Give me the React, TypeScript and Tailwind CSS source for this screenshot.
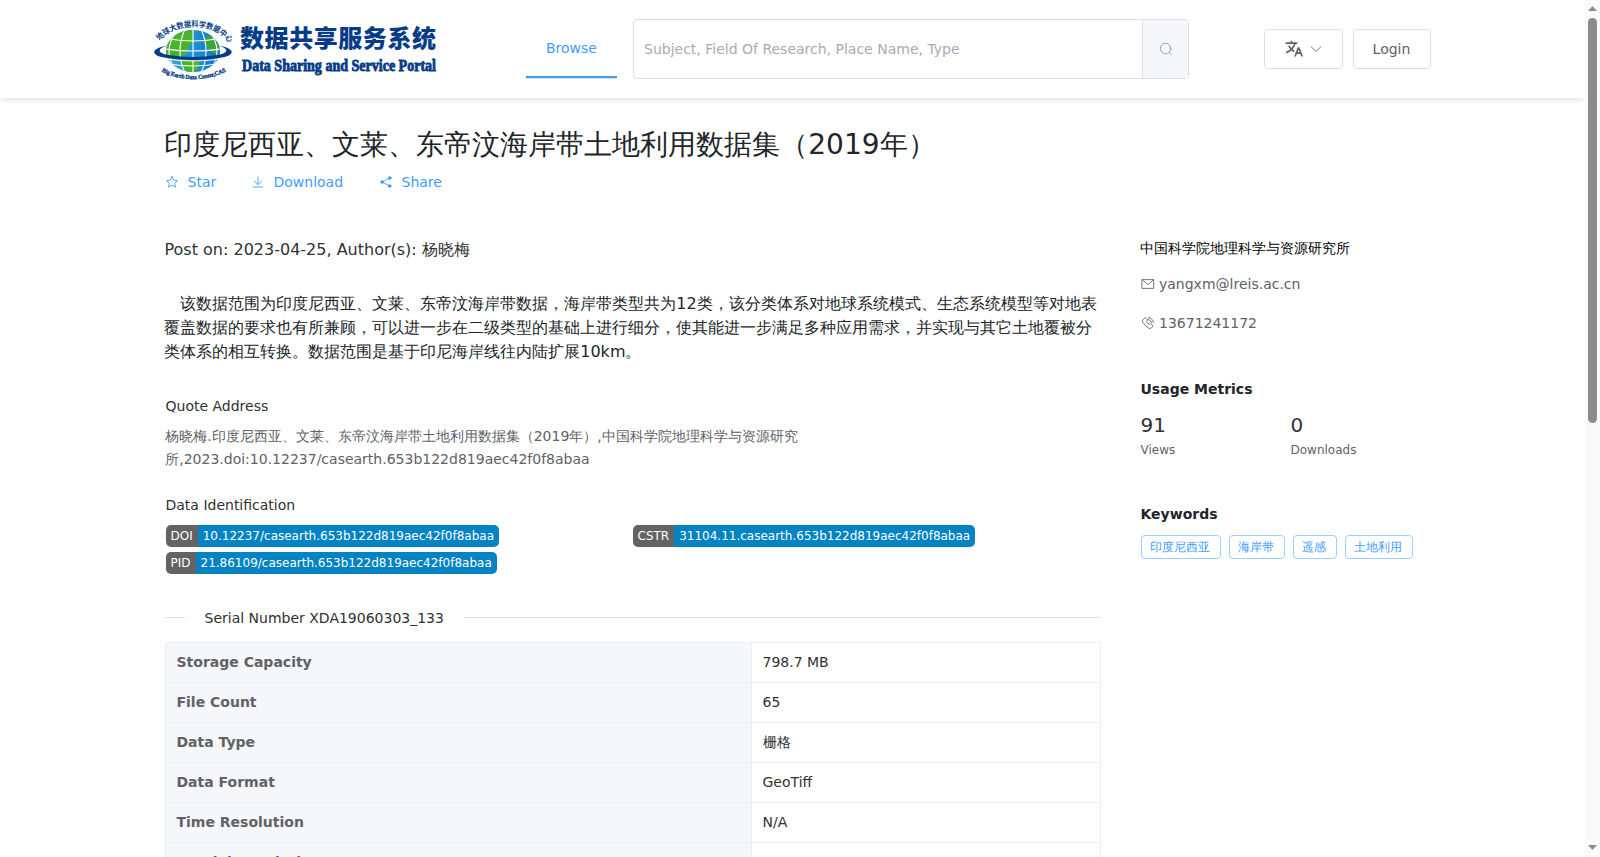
import type { ReactNode } from 'react';

const rows: [string, string][] = [
  ['Storage Capacity', '798.7 MB'],
  ['File Count', '65'],
  ['Data Type', '栅格'],
  ['Data Format', 'GeoTiff'],
  ['Time Resolution', 'N/A'],
  ['Spatial Resolution', ''],
];

const keywords = ['印度尼西亚', '海岸带', '遥感', '土地利用'];

function Icon({ children, className = 'size-3.5' }: { children: ReactNode; className?: string }) {
  return (
    <svg viewBox="0 0 1024 1024" className={`shrink-0 ${className}`} fill="none" stroke="currentColor" strokeWidth="64" strokeLinecap="round" strokeLinejoin="round">
      {children}
    </svg>
  );
}

function TranslateIcon() {
  return (
    <svg viewBox="0 0 24 24" className="size-5 shrink-0" fill="currentColor">
      <path d="m18.5 10 4.4 11h-2.155l-1.201-3h-4.09l-1.199 3h-2.154L16.5 10h2zM10 2v2h6v2h-1.968a18.222 18.222 0 0 1-3.62 6.301 14.864 14.864 0 0 0 2.336 1.707l-.751 1.878A17.015 17.015 0 0 1 9 13.725a16.676 16.676 0 0 1-6.201 3.548l-.536-1.929a14.7 14.7 0 0 0 5.327-3.042A18.078 18.078 0 0 1 4.767 8h2.24A16.032 16.032 0 0 0 9 10.877a16.165 16.165 0 0 0 2.91-4.876L2 6V4h6V2h2zm7.5 10.885L16.253 16h2.492L17.5 12.885z" />
    </svg>
  );
}

function Logo() {
  return (
    <svg viewBox="0 0 290 70" className="h-[70px] w-[290px] shrink-0 overflow-visible">
      <defs>
        <path id="arcTop" d="M7 27C19 9 60 7 75 28" />
        <path id="arcBottom" d="M8.500 57.500Q40 73 73 57.500" />
        <clipPath id="globe"><ellipse cx="40" cy="37" rx="27" ry="21" /></clipPath>
        <linearGradient id="sea" x1="0" x2="1">
          <stop offset="0" stopColor="#35aee0" />
          <stop offset="1" stopColor="#0a74c8" />
        </linearGradient>
      </defs>
      <g clipPath="url(#globe)">
        <rect x="12" y="15" width="56" height="44" fill="url(#sea)" />
        <path d="M10 39 L16 21 L30 15 L42 16 L39 22 L42 27 L36 32 L35 38 L28 42 L25 47 L12 46Z" fill="#4bb22c" />
        <path d="M52 24 L58 21 L63 27 L67 35 L62 40 L56 36 L52 31Z" fill="#3ea43c" />
        <path d="M27 46 L37 44 L47 48 L44 56 L37 60 L29 53Z" fill="#4bb22c" />
        <g fill="none" stroke="#fff" strokeWidth="1.1">
          <path d="M40 15V59M32 15Q22 37 32 59M48 15Q58 37 48 59M24 17Q8 37 24 58M56 17Q72 37 56 58" />
          <path d="M16 25Q40 29 64 25M12 35Q40 39 68 35M16 50Q40 54 64 50" />
        </g>
      </g>
      <path d="M14 31.500C-4 35 -2 42 14 44Q40 48 66 44C82 42 84 35 66 31.500C76 35 76 39 64 41Q40 45 16 41C4 39 4 35 14 31.500Z" fill="#063b88" />
      <path d="M14 45Q40 49 66 45" fill="none" stroke="#fff" strokeWidth="1" />
      <text fontFamily="'Noto Sans CJK SC'" fontSize="8" fontWeight="700" fill="#063b88">
        <textPath href="#arcTop" textLength="78" lengthAdjust="spacingAndGlyphs">地球大数据科学数据中心</textPath>
      </text>
      <text fontFamily="'Liberation Serif'" fontSize="6" fontWeight="700" fill="#063b88" stroke="#063b88" strokeWidth="0.3">
        <textPath href="#arcBottom" textLength="67">Big Earth Data Center,CAS</textPath>
      </text>
      <text x="87" y="32.500" fontFamily="'Noto Sans CJK SC'" fontSize="24" fontWeight="900" fill="#063b88" textLength="196">数据共享服务系统</text>
      <text x="89" y="56.500" fontFamily="'Liberation Serif'" fontSize="17.500" fontWeight="700" fill="#063b88" stroke="#063b88" strokeWidth="0.9" textLength="194" lengthAdjust="spacingAndGlyphs">Data Sharing and Service Portal</text>
    </svg>
  );
}

function Header() {
  return (
    <header className="relative flex h-[98px] shrink-0 items-center bg-white shadow-[0_2px_6px_rgba(0,0,0,0.12)]">
      <div className="ml-[153px] w-[373px]"><Logo /></div>
      <nav className="flex h-[60px] w-[91px] items-center justify-center border-b border-[#dcdfe6]">
        <a className="flex h-[59px] w-full items-center justify-center border-b-2 border-[#409eff] text-sm text-[#409eff]">Browse</a>
      </nav>
      <div className="ml-4 flex h-[60px] w-[556px] overflow-hidden rounded border border-[#dcdfe6]">
        <div className="flex flex-1 items-center pl-2.5 text-sm text-[#a8abb2]">Subject, Field Of Research, Place Name, Type</div>
        <div className="flex w-[46px] items-center justify-center border-l border-[#dcdfe6] bg-[#f5f7fa] text-[#909399]">
          <Icon><circle cx="480" cy="480" r="384" /><path d="m774 774 124 124" /></Icon>
        </div>
      </div>
      <button className="ml-[75px] flex h-10 w-[79px] items-center justify-center gap-[5px] rounded border border-[#dcdfe6] text-[#606266]">
        <TranslateIcon />
        <Icon><path d="M170 362 512 694 854 362" /></Icon>
      </button>
      <button className="ml-2.5 h-10 w-[78px] rounded border border-[#dcdfe6] pr-px text-sm text-[#606266]">Login</button>
    </header>
  );
}

function Badge({ label, value }: { label: string; value: string }) {
  return (
    <div className="flex h-[22px] overflow-hidden rounded-[5px] text-xs leading-[22px] text-white">
      <span className="bg-[#636363] px-[5px]">{label}</span>
      <span className="bg-[#0483c3] px-[5px]">{value}</span>
    </div>
  );
}

function Article() {
  return (
    <article className="w-[936.500px] shrink-0">
      <div className="mt-[13px] flex h-6 items-center text-base text-[#303133]">Post on: 2023-04-25, Author(s): 杨晓梅</div>
      <p className="-ml-[0.250px] mt-[30px] indent-4 text-base leading-6 text-[#212529]">
        该数据范围为印度尼西亚、文莱、东帝汶海岸带数据，海岸带类型共为12类，该分类体系对地球系统模式、生态系统模型等对地表覆盖数据的要求也有所兼顾，可以进一步在二级类型的基础上进行细分，使其能进一步满足多种应用需求，并实现与其它土地覆被分类体系的相互转换。数据范围是基于印尼海岸线往内陆扩展10km。
      </p>
      <h2 className="mt-8 pl-px text-sm leading-5 text-[#303133]">Quote Address</h2>
      <p className="-ml-[0.250px] mt-[9px] w-[640px] pl-px text-sm leading-[23px] text-[#606266]">
        杨晓梅.印度尼西亚、文莱、东帝汶海岸带土地利用数据集（2019年）,中国科学院地理科学与资源研究所,2023.doi:10.12237/casearth.653b122d819aec42f0f8abaa
      </p>
      <h2 className="mt-6 pl-px text-sm leading-5 text-[#303133]">Data Identification</h2>
      <div className="mt-2.5 grid grid-cols-[467px_1fr] justify-items-start gap-y-[5px] pl-px">
        <Badge label="DOI" value="10.12237/casearth.653b122d819aec42f0f8abaa" />
        <Badge label="CSTR" value="31104.11.casearth.653b122d819aec42f0f8abaa" />
        <Badge label="PID" value="21.86109/casearth.653b122d819aec42f0f8abaa" />
      </div>
      <div className="mt-[34px] flex h-5 items-center text-sm text-[#303133]">
        <span className="-mt-px h-px w-5 bg-[#dcdfe6]" />
        <span className="px-5">Serial Number XDA19060303_133</span>
        <span className="-mt-px h-px flex-1 bg-[#dcdfe6]" />
      </div>
      <div className="mt-[14px] border-l border-t border-[#ebeef5] text-sm">
        {rows.map(([name, value]) => (
          <div key={name} className="grid h-10 grid-cols-[586px_1fr]">
            <div className="flex items-center border-b border-r border-[#ebeef5] bg-[#f5f7fa] pb-0.5 pl-[11px] font-bold text-[#606266]">{name}</div>
            <div className="flex items-center border-b border-r border-[#ebeef5] pb-0.5 pl-[11px] text-[#303133]">{value}</div>
          </div>
        ))}
      </div>
    </article>
  );
}

function Sidebar() {
  return (
    <aside className="ml-[39.500px] w-[300px] text-sm text-[#606266]">
      <div className="-ml-[0.250px] mt-[13px] h-5 leading-5 text-black">中国科学院地理科学与资源研究所</div>
      <div className="mt-4 flex h-5 items-center gap-[4.500px]">
        <Icon><path d="M96 192h832v640H96zM128 212l300 290q84 70 168 0L896 212" /></Icon>
        yangxm@lreis.ac.cn
      </div>
      <div className="mt-[19px] flex h-5 items-center gap-[4.500px]">
        <Icon><path d="M290 130 120 300Q90 360 150 470 300 760 560 885 680 935 740 890L895 730 700 545 600 610Q480 560 405 420L475 320ZM540 250Q730 290 770 480M540 110Q870 150 910 480" /></Icon>
        13671241172
      </div>
      <h3 className="mt-[46px] h-5 font-bold leading-5 text-[#212529]">Usage Metrics</h3>
      <div className="mt-3 grid grid-cols-[150px_1fr]">
        {[['91', 'Views'], ['0', 'Downloads']].map(([n, label]) => (
          <div key={label}>
            <div className="text-xl leading-7 text-[#303133]">{n}</div>
            <div className="mt-[3px] text-xs leading-4">{label}</div>
          </div>
        ))}
      </div>
      <h3 className="mt-[46px] h-5 font-bold leading-5 text-[#212529]">Keywords</h3>
      <div className="mt-[11px] flex gap-2">
        {keywords.map((k) => (
          <span key={k} className="h-6 rounded border border-[#9fceff] pl-[8.750px] pr-[9.250px] text-xs leading-[22px] text-[#409eff]">{k}</span>
        ))}
      </div>
    </aside>
  );
}

export default function App() {
  return (
    <div className="flex h-[857px] w-[1600px] overflow-hidden bg-white font-['DejaVu_Sans',sans-serif]">
      <div className="flex w-[1585px] flex-col overflow-hidden">
        <Header />
        <main className="pl-[164.500px]">
          <h1 className="-ml-[0.250px] mt-[27px] h-10 text-[28px] leading-10 text-[#212529]">印度尼西亚、文莱、东帝汶海岸带土地利用数据集（2019年）</h1>
          <div className="mt-[7px] flex h-5 items-center text-sm text-[#409eff]">
            <a className="flex w-[86px] items-center gap-[9px]">
              <Icon><path d="m512 110 122 260 286 38-208 197 52 285-252-137-252 137 52-285L104 408l286-38z" /></Icon>Star
            </a>
            <a className="flex w-[128px] items-center gap-[9px]">
              <Icon><path d="M160 880h704M512 140v560M250 450l262 262 262-262" /></Icon>Download
            </a>
            <a className="flex items-center gap-[9px]">
              <Icon><path d="M780 220 230 512 780 804" /><g fill="currentColor"><circle cx="780" cy="220" r="100" /><circle cx="230" cy="512" r="100" /><circle cx="780" cy="804" r="100" /></g></Icon>Share
            </a>
          </div>
          <div className="mt-[33px] flex">
            <Article />
            <Sidebar />
          </div>
        </main>
      </div>
      <div className="flex w-[15px] flex-col items-center bg-[#fafafa]">
        <svg viewBox="0 0 9 5" className="mt-1.5 h-[5px] w-[9px] fill-[#8b8b8b]"><path d="M4.5 0 9 5H0z" /></svg>
        <div className="mt-[7px] h-[405px] w-[9px] rounded-full bg-[#8b8b8b]" />
        <svg viewBox="0 0 9 5" className="mb-[7px] mt-auto h-[5px] w-[9px] fill-[#8b8b8b]"><path d="M0 0h9L4.5 5z" /></svg>
      </div>
    </div>
  );
}
